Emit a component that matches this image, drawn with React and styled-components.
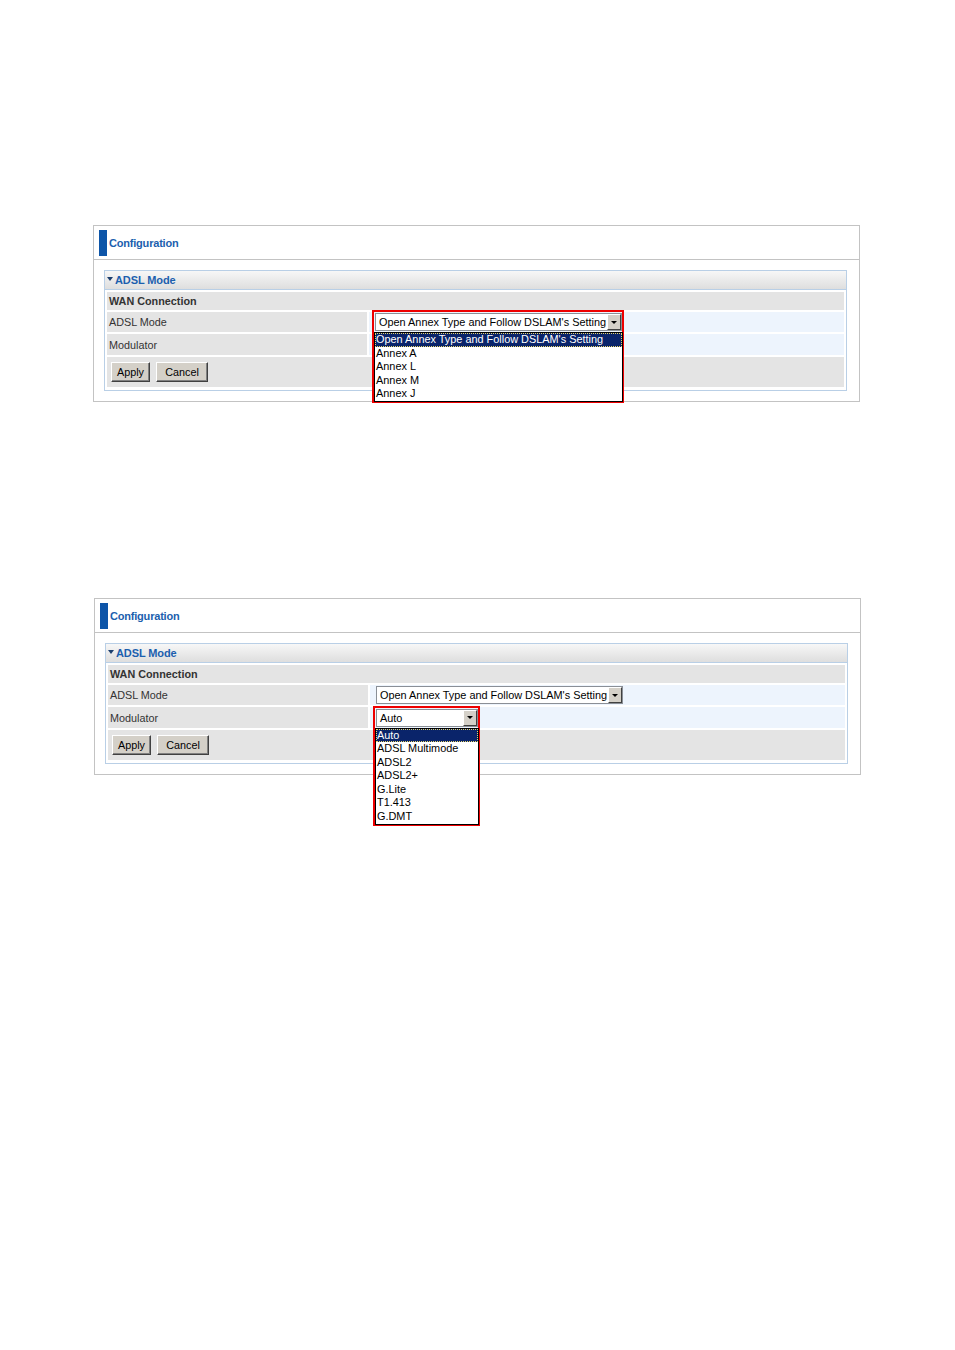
import React from "react";
import styled, { createGlobalStyle } from "styled-components";

const GlobalStyle = createGlobalStyle`
  html, body {
    margin: 0;
    padding: 0;
    background: #ffffff;
    font-family: "Liberation Sans", Arial, sans-serif;
  }
`;

const Page = styled.div`
  width: 955px;
  height: 1350px;
  padding: 225px 0 0 93px;
  box-sizing: border-box;
  display: flex;
  flex-direction: column;
  gap: 196px;
`;

const Panel = styled.div`
  width: 767px;
  margin-left: ${p => p.$shift || 0}px;
  border: 1px solid #c3c3c3;
  box-sizing: border-box;
  background: #fff;
`;

const Header = styled.div`
  height: 33px;
  border-bottom: 1px solid #c3c3c3;
  display: flex;
  align-items: center;
  padding-left: 5px;
  gap: 2px;
`;

const Bar = styled.div`
  width: 8px;
  height: 26px;
  background: #0d55a8;
`;

const HeaderTitle = styled.span`
  font-size: 11px;
  font-weight: bold;
  color: #1c5fae;
  letter-spacing: -0.2px;
`;

const Body = styled.div`
  padding: 10px 12px 10px 10px;
`;

const Box = styled.div`
  border: 1px solid #b9cfe6;
`;

const BoxTitle = styled.div`
  height: 18px;
  border-bottom: 1px solid #b9cfe6;
  background: linear-gradient(#f7f7f7, #dedede);
  display: flex;
  align-items: center;
  padding-left: 2px;
  gap: 2px;
  font-size: 11px;
  color: #1c5fae;
  font-weight: bold;
  letter-spacing: -0.1px;
`;

const Caret = styled.span`
  width: 0;
  height: 0;
  border-left: 3px solid transparent;
  border-right: 3px solid transparent;
  border-top: 4px solid #1d3f6e;
  margin-top: -3px;
`;

const Table = styled.div`
  display: grid;
  grid-template-columns: 260px 1fr;
  gap: 2px;
  padding: 2px 2px 3px;
`;

const Cell = styled.div`
  background: ${p => (p.$blue ? "#edf4fd" : "#e4e4e4")};
  grid-column: ${p => (p.$wide ? "1 / span 2" : "auto")};
  height: ${p => p.$h}px;
  display: flex;
  align-items: center;
  padding-left: ${p => (p.$blue ? 6 : 2)}px;
  font-size: 10.8px;
  color: #333;
  font-weight: ${p => (p.$bold ? "bold" : "normal")};
  position: relative;
`;

const SelectWrap = styled.div`
  position: relative;
  width: ${p => p.$w}px;
`;

const Select = styled.div`
  height: 18px;
  box-sizing: border-box;
  border: 1px solid #8a8f96;
  background: #fff;
  display: flex;
  align-items: center;
  font-size: 10.9px;
  color: #000;
  padding-left: 3px;
`;

const SelectText = styled.span`
  flex: 1;
  white-space: nowrap;
`;

const Arrow = styled.span`
  width: 14px;
  height: 16px;
  box-sizing: border-box;
  background: #d4d0c8;
  border: 1px solid;
  border-color: #fff #404040 #404040 #fff;
  display: flex;
  align-items: center;
  justify-content: center;
  &::after {
    content: "";
    border-left: 3px solid transparent;
    border-right: 3px solid transparent;
    border-top: 3px solid #000;
  }
`;

const Marker = styled.div`
  position: absolute;
  top: -3px;
  left: -3px;
  right: -2px;
  border: 2px solid #ee0000;
  padding: 20px 0 0 0;
  z-index: 2;
  pointer-events: none;
`;

const List = styled.div`
  border: 1px solid #000;
  background: #fff;
  margin-bottom: -1px;
  margin-right: -1px;
`;

const Item = styled.div`
  font-size: 10.9px;
  line-height: 13.6px;
  height: 13.6px;
  padding-left: 1px;
  color: ${p => (p.$active ? "#fff" : "#000")};
  background: ${p => (p.$active ? "#0a246a" : "transparent")};
  outline: ${p => (p.$active ? "1px dotted #e8d56a" : "none")};
  outline-offset: -1px;
  white-space: nowrap;
  overflow: hidden;
`;

const Button = styled.button`
  width: ${p => p.$w}px;
  height: 20px;
  padding: 0;
  font-family: inherit;
  font-size: 10.8px;
  color: #000;
  background: #d4d0c8;
  border: 1px solid;
  border-color: #fff #404040 #404040 #fff;
  box-shadow: inset -1px -1px 0 #808080;
  margin: 0;
`;

const Buttons = styled.div`
  display: flex;
  gap: 6px;
  padding-left: 2px;
`;

const annexOptions = [
  "Open Annex Type and Follow DSLAM's Setting",
  "Annex A",
  "Annex L",
  "Annex M",
  "Annex J",
];

const modOptions = ["Auto", "ADSL Multimode", "ADSL2", "ADSL2+", "G.Lite", "T1.413", "G.DMT"];

const Dropdown = ({ width, value, options, open }) => (
  <SelectWrap $w={width}>
    <Select>
      <SelectText>{value}</SelectText>
      <Arrow />
    </Select>
    {open && (
      <Marker>
        <List>
          {options.map((o, i) => (
            <Item key={o} $active={i === 0}>{o}</Item>
          ))}
        </List>
      </Marker>
    )}
  </SelectWrap>
);

const ConfigPanel = ({ open, shift }) => (
  <Panel $shift={shift}>
    <Header>
      <Bar />
      <HeaderTitle>Configuration</HeaderTitle>
    </Header>
    <Body>
      <Box>
        <BoxTitle>
          <Caret />
          ADSL Mode
        </BoxTitle>
        <Table>
          <Cell $wide $bold $h={18}>WAN Connection</Cell>
          <Cell $h={20}>ADSL Mode</Cell>
          <Cell $blue $h={20}>
            <Dropdown width={247} value={annexOptions[0]} options={annexOptions} open={open === "annex"} />
          </Cell>
          <Cell $h={21}>Modulator</Cell>
          <Cell $blue $h={21}>
            <Dropdown width={102} value="Auto" options={modOptions} open={open === "mod"} />
          </Cell>
          <Cell $wide $h={30}>
            <Buttons>
              <Button $w={39}>Apply</Button>
              <Button $w={52}>Cancel</Button>
            </Buttons>
          </Cell>
        </Table>
      </Box>
    </Body>
  </Panel>
);

export default function App() {
  return (
    <>
      <GlobalStyle />
      <Page>
        <ConfigPanel open="annex" />
        <ConfigPanel open="mod" shift={1} />
      </Page>
    </>
  );
}
